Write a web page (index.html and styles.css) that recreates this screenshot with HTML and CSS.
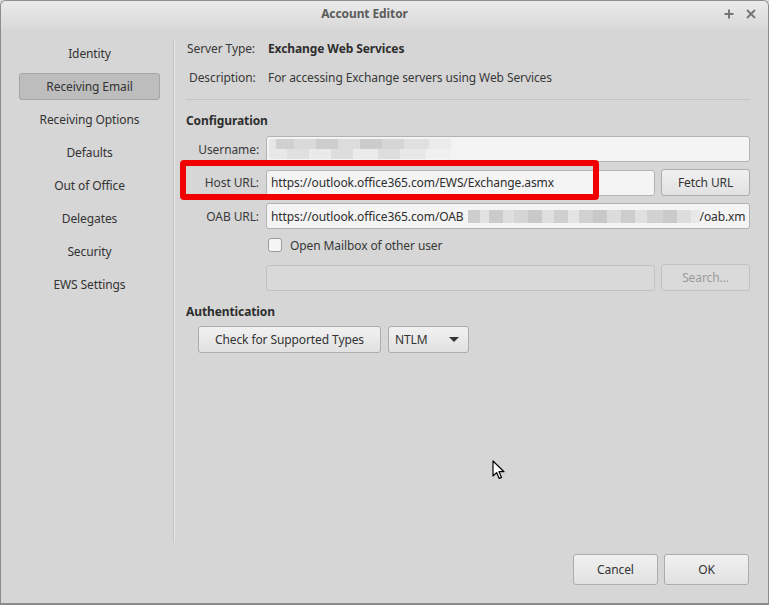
FILE: index.html
```html
<!DOCTYPE html>
<html lang="en">
<head>
  <meta charset="UTF-8" />
  <title>Account Editor</title>
  <link rel="stylesheet" href="styles.css">
</head>
<body>

<div class="window">
  <div class="titlebar">
    <span class="title">Account Editor</span>
    <div class="wm-btns">
      <svg width="10" height="10" viewBox="0 0 10 10"><path d="M5 0.5v9M0.5 5h9" stroke="#757575" stroke-width="2"/></svg>
      <svg width="10" height="10" viewBox="0 0 10 10"><path d="M1 1l8 8M9 1l-8 8" stroke="#757575" stroke-width="1.8"/></svg>
    </div>
  </div>

  <div class="body">
    <ul class="sidebar">
      <li>Identity</li>
      <li class="active">Receiving Email</li>
      <li>Receiving Options</li>
      <li>Defaults</li>
      <li>Out of Office</li>
      <li>Delegates</li>
      <li>Security</li>
      <li>EWS Settings</li>
    </ul>

    <div class="main">
      <div class="info">
        <div class="info-row">
          <span class="info-label">Server Type:</span>
          <span class="info-value strong">Exchange Web Services</span>
        </div>
        <div class="info-row">
          <span class="info-label desc">Description:</span>
          <span class="info-value">For accessing Exchange servers using Web Services</span>
        </div>
      </div>

      <div class="sep"></div>

      <div class="heading">Configuration</div>

      <div class="form">
        <label class="lbl">Username:</label>
        <div class="field wide"><span class="blur blur-user"></span></div>

        <label class="lbl">Host URL:</label>
        <div class="field">https://outlook.office365.com/EWS/Exchange.asmx</div>
        <button class="btn">Fetch URL</button>

        <label class="lbl">OAB URL:</label>
        <div class="field wide">https://outlook.office365.com/OAB<span class="blur blur-oab"></span>/oab.xm</div>

        <div class="check-row">
          <span class="checkbox"></span>
          <span>Open Mailbox of other user</span>
        </div>

        <div class="field disabled span2"></div>
        <button class="btn disabled">Search...</button>
      </div>

      <div class="heading auth">Authentication</div>

      <div class="auth-row">
        <button class="btn check">Check for Supported Types</button>
        <button class="btn combo">NTLM <span class="arrow"></span></button>
      </div>
    </div>
  </div>

  <div class="footer">
    <button class="btn big">Cancel</button>
    <button class="btn big">OK</button>
  </div>

  <!-- red annotation box from the screenshot -->
  <div class="highlight"></div>

  <svg class="cursor" width="13" height="20" viewBox="0 0 13 20">
    <path d="M1 1 L1 16 L4.6 12.6 L7.2 18.4 L9.6 17.4 L7 11.7 L12 11.7 Z" fill="#fff" stroke="#000" stroke-width="1.2" stroke-linejoin="round"/>
  </svg>
</div>

</body>
</html>
```

FILE: styles.css
```css
* {
  box-sizing: border-box;
}

body {
  margin: 0;
  font-family: "Noto Sans", "DejaVu Sans", sans-serif;
  font-size: 12px;
  letter-spacing: -0.1px;
  color: #383838;
  background: #d6d6d6;
}

.window {
  position: relative;
  width: 769px;
  height: 605px;
  display: flex;
  flex-direction: column;
  background: #d6d6d6;
  border: 1px solid #8c8c8c;
  border-bottom-width: 2px;
  border-radius: 6px 6px 0 0;
  overflow: hidden;
}

.titlebar {
  height: 29px;
  flex-shrink: 0;
  display: flex;
  align-items: center;
  justify-content: center;
  position: relative;
  padding-right: 40px;
  background: linear-gradient(#ebebeb, #d8d8d8);
}

.title {
  font-weight: bold;
  color: #5c5c5c;
  margin-top: -4px;
}

.wm-btns {
  position: absolute;
  right: 12px;
  top: 8px;
  display: flex;
  gap: 12px;
}

.body {
  flex: 1;
  display: flex;
}

.sidebar {
  list-style: none;
  margin: 10px 0 0 0;
  padding: 0 13px 0 18px;
  width: 173px;
  border-right: 1px solid #c4c4c4;
  box-shadow: 1px 0 0 #e6e6e6;
}

.sidebar li {
  height: 27px;
  width: 141px;
  margin-bottom: 6px;
  display: flex;
  align-items: center;
  justify-content: center;
  color: #333;
  border: 1px solid transparent;
  border-radius: 3px;
}

.sidebar li.active {
  background: #bdbdbd;
  border-color: #a4a4a4;
}

.main {
  flex: 1;
  padding: 4px 18px 0 12px;
}

.info-row {
  height: 29px;
  display: flex;
  align-items: center;
}

.info-label {
  width: 82px;
  padding-left: 1px;
}

.info-label.desc {
  padding-left: 3px;
}

.strong {
  font-weight: bold;
  color: #2e2e2e;
}

.sep {
  height: 1px;
  background: #c3c3c3;
  margin: 7px 0 0 0;
}

.heading {
  font-weight: bold;
  color: #2e2e2e;
  height: 17px;
  line-height: 17px;
  margin-top: 12px;
}

.heading.auth {
  margin-top: 12px;
}

.form {
  margin-top: 7px;
  display: grid;
  grid-template-columns: 74px 1fr 89px;
  column-gap: 6px;
  row-gap: 7px;
  align-items: center;
}

.lbl {
  text-align: right;
  padding-right: 1px;
  color: #3a3a3a;
}

.field {
  height: 26px;
  display: flex;
  align-items: center;
  padding: 0 4px;
  background: #f4f4f4;
  border: 1px solid #b3b3b3;
  border-radius: 3px;
  white-space: nowrap;
  overflow: hidden;
  color: #2e2e2e;
}

.field.wide {
  grid-column: 2 / 4;
}

.field.disabled {
  background: #d9d9d9;
  border-color: #c1c1c1;
}

.span2 {
  grid-column: 2 / 3;
}

.blur {
  display: inline-block;
  flex-shrink: 0;
}

.blur-user {
  width: 182px;
  height: 20px;
  margin-left: -2px;
  background:
    linear-gradient(90deg, #e6e6e6 0 4%, #d0d0d0 4% 14%, #dadada 14% 26%, #cdcdcd 26% 38%, #dcdcdc 38% 50%, #cccccc 50% 62%, #d6d6d6 62% 74%, #e0e0e0 74% 88%, #ebebeb 88% 100%) top / 100% 50% no-repeat,
    linear-gradient(90deg, #e8e8e8 0 10%, #e0e0e0 10% 22%, #eaeaea 22% 34%, #dddddd 34% 46%, #ebebeb 46% 60%, #dedede 60% 72%, #e8e8e8 72% 86%, #f0f0f0 86% 100%) bottom / 100% 50% no-repeat;
}

.blur-oab {
  width: 232px;
  height: 13px;
  margin-left: 4px;
  background: linear-gradient(90deg, #cdcdcd 0 5%, #e2e2e2 5% 9%, #cbcbcb 9% 15%, #dedede 15% 20%, #d5d5d5 20% 26%, #c9c9c9 26% 32%, #dfdfdf 32% 37%, #cfcfcf 37% 43%, #e4e4e4 43% 48%, #d1d1d1 48% 54%, #c8c8c8 54% 60%, #dcdcdc 60% 66%, #cdcdcd 66% 72%, #e0e0e0 72% 77%, #d2d2d2 77% 84%, #cacaca 84% 90%, #dddddd 90% 96%, #e8e8e8 96% 100%);
}

.check-row {
  grid-column: 2 / 4;
  height: 20px;
  display: flex;
  align-items: center;
  gap: 8px;
  padding-left: 2px;
  margin-top: -1px;
  margin-bottom: 2px;
}

.checkbox {
  width: 14px;
  height: 14px;
  background: #f5f5f5;
  border: 1px solid #9c9c9c;
  border-radius: 3px;
}

.btn {
  font-family: inherit;
  font-size: 12px;
  letter-spacing: inherit;
  color: #333;
  height: 27px;
  padding: 0 10px;
  background: linear-gradient(#f1f1f1, #e1e1e1);
  border: 1px solid #acacac;
  border-radius: 3px;
}

.btn.disabled {
  background: #dadada;
  border-color: #c2c2c2;
  color: #9a9a9a;
}

.auth-row {
  margin-top: 6px;
  padding-left: 12px;
  display: flex;
  gap: 7px;
}

.btn.check {
  width: 183px;
}

.btn.combo {
  width: 81px;
  display: flex;
  align-items: center;
  justify-content: space-between;
  padding: 0 9px 0 6px;
}

.arrow {
  width: 0;
  height: 0;
  border-left: 5px solid transparent;
  border-right: 5px solid transparent;
  border-top: 5px solid #333;
}

.footer {
  height: 61px;
  flex-shrink: 0;
  display: flex;
  justify-content: flex-end;
  gap: 6px;
  padding: 12px 19px 0 0;
}

.btn.big {
  width: 85px;
  height: 31px;
}

.highlight {
  position: absolute;
  left: 179px;
  top: 159px;
  width: 419px;
  height: 40px;
  border: 6px solid #f20000;
  border-radius: 4px;
}

.cursor {
  position: absolute;
  left: 491px;
  top: 459px;
}
```
